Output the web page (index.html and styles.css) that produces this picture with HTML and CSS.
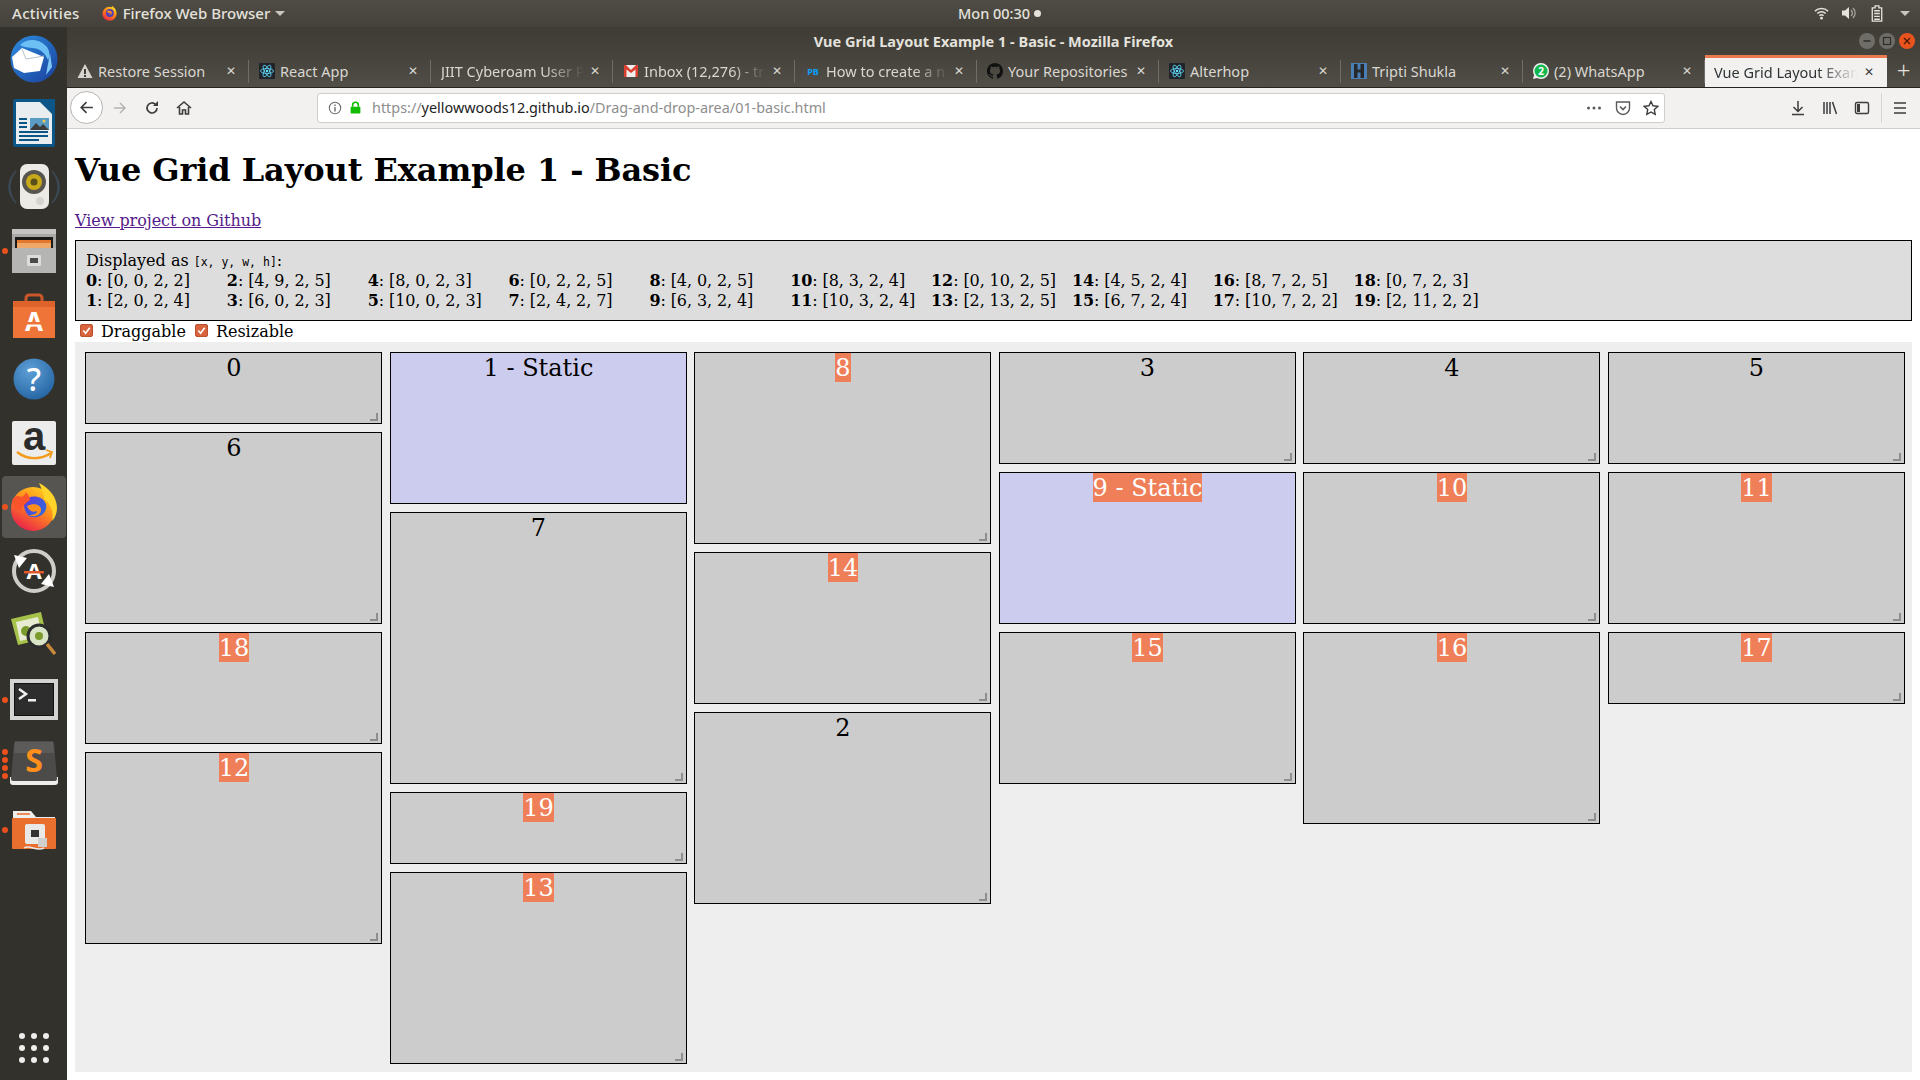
FILE: index.html
```html
<!DOCTYPE html>
<html lang="en">
<head>
<meta charset="utf-8">
<title>Vue Grid Layout Example 1 - Basic</title>
<link rel="stylesheet" href="styles.css">
</head>
<body>
<header class="topbar">
  <div class="topbar-left">
    <span class="top-label top-activities">Activities</span>
    <span class="top-app">
      <svg class="ff-small" viewBox="0 0 48 48"><defs><linearGradient id="ffa" x1="0.8" y1="0" x2="0.2" y2="1"><stop offset="0" stop-color="#ffd21f"/><stop offset="0.5" stop-color="#ff7a1a"/><stop offset="1" stop-color="#e8204f"/></linearGradient></defs><circle cx="24" cy="26" r="20" fill="url(#ffa)"/><circle cx="25" cy="24" r="11" fill="#4a3fc0"/><path d="M16 20c6-6 13-3 15 2 1 5-5 9-11 7 5 0 8-2 7-5-3 2-8 0-11-4z" fill="#ff8b1d"/><path d="M30 3c8 5 14 13 13 22-2-7-6-10-10-13 0-3-2-6-3-9z" fill="#ffd21f"/></svg>
      <span class="top-label">Firefox Web Browser</span>
      <span class="caret"></span>
    </span>
  </div>
  <div class="top-clock">Mon 00:30<span class="clock-dot"></span></div>
  <div class="topbar-right">
    <svg class="st-wifi" viewBox="0 0 16 16"><path d="M1 6a10 10 0 0 1 14 0M3.500 8.500a6.500 6.500 0 0 1 9 0M5.800 11a3.200 3.200 0 0 1 4.400 0" fill="none" stroke="#e4e2dc" stroke-width="1.500"/><circle cx="8" cy="13.500" r="1.500" fill="#e4e2dc"/></svg>
    <svg class="st-vol" viewBox="0 0 16 16"><path d="M1 5.500h3l4-3.500v12l-4-3.500H1z" fill="#e4e2dc"/><path d="M10 5a4 4 0 0 1 0 6M12 3a7 7 0 0 1 0 10" fill="none" stroke="#a8a69f" stroke-width="1.300"/></svg>
    <svg class="st-bat" viewBox="0 0 12 18"><path d="M4 1h4v2h3v14H1V3h3z" fill="none" stroke="#e4e2dc" stroke-width="1.400"/><path d="M3 6h6M3 9h6M3 12h6M3 15h6" stroke="#e4e2dc" stroke-width="1.500"/></svg>
    <span class="caret caret-right"></span>
  </div>
</header>
<div class="desktop">
  <nav class="dock">
    <div class="dock-item">
      <svg class="dock-icon" viewBox="0 0 48 48"><defs><linearGradient id="tb" x1="0" y1="0" x2="1" y2="1"><stop offset="0" stop-color="#2d8ee0"/><stop offset="1" stop-color="#1a3f9c"/></linearGradient></defs><circle cx="24" cy="24" r="23.500" fill="url(#tb)"/><path d="M10 10c8-8 20-6 27 2 3 5 3 9 1 13-3-7-8-12-16-12-5-1-9-1-12-3z" fill="#6cc0f4"/><path d="M2 22l10-9 22 9-4 14-16 2-10-5z" fill="#fff"/><path d="M12 14l4 10 18-3" fill="none" stroke="#b9c2cc" stroke-width="1"/><path d="M40 18l2 14-6 8z" fill="#7fc8f5"/></svg>
    </div>
    <div class="dock-item">
      <svg class="dock-icon" viewBox="0 0 48 48"><rect x="3" y="0" width="42" height="48" rx="2" fill="#0c5587"/><path d="M6 3h24l12 12v30H6z" fill="#e9edef"/><path d="M32 0h13v13z" fill="#0c5587"/><path d="M9 20h8M9 24h8M9 28h8M9 33h29M9 37h29M9 41h20" stroke="#0c5587" stroke-width="2"/><rect x="20" y="19" width="19" height="12" fill="#5a9bc4"/><path d="M20 31l6-7 4 4 3-3 6 6z" fill="#3c3c3c"/><circle cx="34" cy="22" r="1.500" fill="#f2c94c"/></svg>
    </div>
    <div class="dock-item">
      <svg class="dock-icon" viewBox="0 0 48 48"><path d="M6 8a24 24 0 0 0 0 32M42 8a24 24 0 0 1 0 32M3 12a20 20 0 0 0 0 24M45 12a20 20 0 0 1 0 24" fill="none" stroke="#3c4a58" stroke-width="1.500"/><rect x="10" y="1" width="29" height="45" rx="7" fill="#eceae4"/><circle cx="24" cy="19" r="12" fill="#57554e"/><circle cx="24" cy="19" r="8" fill="#c8a91a"/><circle cx="24" cy="19" r="3.500" fill="#57501a"/><circle cx="30" cy="38" r="4" fill="#d6d4ce"/></svg>
    </div>
    <div class="dock-item">
      <span class="run-dot"></span>
      <svg class="dock-icon" viewBox="0 0 48 48"><rect x="2" y="2" width="44" height="44" rx="2" fill="#a9a9a7"/><rect x="2" y="2" width="44" height="5" fill="#c4c4c2"/><rect x="5" y="10" width="38" height="12" fill="#1d1b19"/><rect x="7" y="13" width="34" height="9" fill="#f0a868"/><rect x="7" y="13" width="34" height="3" fill="#e2772e"/><rect x="2" y="21" width="44" height="25" fill="#b5b5b3"/><rect x="17" y="28" width="14" height="11" rx="1" fill="#dcdcda"/><rect x="20" y="31" width="8" height="5" fill="#4a4a48"/></svg>
    </div>
    <div class="dock-item">
      <svg class="dock-icon" viewBox="0 0 48 48"><path d="M16 12V7a3 3 0 0 1 3-3h10a3 3 0 0 1 3 3v5" fill="none" stroke="#c9572a" stroke-width="3"/><path d="M3 10h42v37H3z" fill="#ef7437"/><path d="M3 10h42v6H3z" fill="#dd632a"/><text x="24" y="40" class="dock-a">A</text><rect x="13" y="31" width="22" height="2.500" fill="#ef7437"/></svg>
    </div>
    <div class="dock-item">
      <svg class="dock-icon" viewBox="0 0 48 48"><defs><radialGradient id="hp" cx="0.4" cy="0.3" r="0.8"><stop offset="0" stop-color="#5fa0d8"/><stop offset="1" stop-color="#20609e"/></radialGradient></defs><circle cx="24" cy="24" r="20.500" fill="url(#hp)"/><text x="24" y="36" class="dock-q">?</text></svg>
    </div>
    <div class="dock-item">
      <svg class="dock-icon" viewBox="0 0 48 48"><rect x="2" y="2" width="44" height="44" rx="2" fill="#ececec"/><text x="24" y="31" class="dock-amz">a</text><path d="M7 33c10 8 24 8 34 1" fill="none" stroke="#f29b1d" stroke-width="2.500"/><path d="M36 31l6 2-2 6" fill="none" stroke="#f29b1d" stroke-width="1.800"/></svg>
    </div>
    <div class="dock-item dock-active">
      <span class="run-dot"></span>
      <svg class="dock-icon" viewBox="0 0 48 48"><defs><linearGradient id="ffb" x1="0.8" y1="0" x2="0.2" y2="1"><stop offset="0" stop-color="#ffd21e"/><stop offset="0.45" stop-color="#ff8a1f"/><stop offset="1" stop-color="#e8174f"/></linearGradient><linearGradient id="ffc" x1="0" y1="0" x2="1" y2="1"><stop offset="0" stop-color="#5f3ad6"/><stop offset="1" stop-color="#2b6fe0"/></linearGradient></defs><circle cx="23" cy="26" r="22" fill="url(#ffb)"/><path d="M14 18c4-6 18-7 22 3 2 8-6 15-15 13-5-2-8-9-7-16z" fill="url(#ffc)"/><path d="M2 18c1 6 4 9 9 10 1-4 4-8 9-11 0-3-2-5-4-8-1 4-5 6-8 4-3 0-5 2-6 5z" fill="#f9542a"/><path d="M17 23c6-3 13-2 14 3 1 6-7 9-12 6 4 0 8-1 8-4-4 2-8 0-10-5z" fill="#ff8e1c"/><path d="M29 0c10 5 18 14 18 25 0 5-2 10-5 13 2-9-1-17-8-22 0-6-3-11-5-16z" fill="#ffd42a"/></svg>
    </div>
    <div class="dock-item">
      <svg class="dock-icon" viewBox="0 0 48 48"><circle cx="24" cy="24" r="20" fill="#33312c" stroke="#cfcdc8" stroke-width="4"/><path d="M4 8l13 3-8 10z" fill="#fff"/><path d="M44 40l-13-3 8-10z" fill="#fff"/><text x="24" y="32" class="dock-upd">A</text><rect x="14" y="24" width="20" height="2.500" fill="#e2572a"/></svg>
    </div>
    <div class="dock-item">
      <svg class="dock-icon" viewBox="0 0 48 48"><path d="M1 8l30-7 6 26-29 7z" fill="#a6c24b"/><path d="M6 11l22-5 4 19-22 5z" fill="#e8ecd2"/><circle cx="16" cy="20" r="5" fill="#7b9b2c"/><circle cx="29" cy="25" r="11" fill="#d9e5c6" stroke="#2b2d2e" stroke-width="3"/><circle cx="29" cy="25" r="4" fill="#7b9b2c"/><path d="M37 33l8 10" stroke="#c98b3a" stroke-width="3.500"/></svg>
    </div>
    <div class="dock-item dock-term">
      <span class="run-dot"></span>
      <svg class="dock-icon" viewBox="0 0 48 48"><rect x="0" y="3" width="48" height="41" fill="#d3d3d1"/><rect x="4" y="7" width="40" height="33" fill="#111"/><rect x="5" y="8" width="38" height="31" fill="#2d2d2d"/><path d="M9 13l7 5-7 5" fill="none" stroke="#f0f0f0" stroke-width="2.500"/><rect x="18" y="23" width="8" height="2.500" fill="#f0f0f0"/></svg>
    </div>
    <div class="dock-item">
      <span class="run-dot dot-a"></span><span class="run-dot dot-b"></span><span class="run-dot dot-c"></span><span class="run-dot dot-d"></span>
      <svg class="dock-icon" viewBox="0 0 48 48"><path d="M0 38h48v5a3 3 0 0 1-3 3H3a3 3 0 0 1-3-3z" fill="#eeeeec"/><path d="M6 2h36a2 2 0 0 1 2 2l3 36a2 2 0 0 1-2 2H3a2 2 0 0 1-2-2L4 4a2 2 0 0 1 2-2z" fill="#4c4b49"/><path d="M5 3h38l1 11H4z" fill="#5c5b59"/><text x="24" y="33" class="dock-s">S</text></svg>
    </div>
    <div class="dock-item dock-folder">
      <span class="run-dot"></span>
      <svg class="dock-icon" viewBox="0 0 48 48"><path d="M3 5h18l5 6h19v10H3z" fill="#eeeeec"/><rect x="7" y="7" width="13" height="2" fill="#ee8a5a"/><rect x="2" y="12" width="44" height="31" rx="1" fill="#e96f2e"/><rect x="15" y="18" width="20" height="20" rx="2" fill="#e9e9e7"/><rect x="21" y="24" width="8" height="7" fill="#333"/><rect x="28" y="32" width="9" height="9" fill="#d0d0ce"/><path d="M14 42c6-4 12 4 20 0" fill="none" stroke="#e9e9e7" stroke-width="1.500"/></svg>
    </div>
    <div class="dock-grid"><i></i><i></i><i></i><i></i><i></i><i></i><i></i><i></i><i></i></div>
  </nav>
  <div class="browser">
    <div class="titlebar">
      <span class="title-text">Vue Grid Layout Example 1 - Basic - Mozilla Firefox</span>
      <div class="win-buttons">
        <span class="win-btn"><svg viewBox="0 0 16 16"><path d="M4.500 8h7" stroke="#2e2d29" stroke-width="1.500"/></svg></span>
        <span class="win-btn"><svg viewBox="0 0 16 16"><rect x="4.500" y="4.500" width="7" height="7" fill="none" stroke="#2e2d29" stroke-width="1.200"/></svg></span>
        <span class="win-btn win-close"><svg viewBox="0 0 16 16"><path d="M5 5l6 6M11 5l-6 6" stroke="#4a1a08" stroke-width="1.300"/></svg></span>
      </div>
    </div>
    <div class="tabstrip">
      <div class="tab"><svg class="tab-icon" viewBox="0 0 16 16"><path d="M8 1l7.500 14H.5z" fill="#d6d4ce"/><rect x="7" y="6" width="2" height="5" fill="#3f3d37"/><rect x="7" y="12" width="2" height="2" fill="#3f3d37"/></svg><span class="tab-label">Restore Session</span><span class="tab-close">✕</span></div>
      <div class="tab"><svg class="tab-icon" viewBox="0 0 16 16"><rect width="16" height="16" rx="1" fill="#20232a"/><g fill="none" stroke="#61dafb" stroke-width=".8"><ellipse cx="8" cy="8" rx="6.500" ry="2.500"/><ellipse cx="8" cy="8" rx="6.500" ry="2.500" transform="rotate(60 8 8)"/><ellipse cx="8" cy="8" rx="6.500" ry="2.500" transform="rotate(120 8 8)"/></g><circle cx="8" cy="8" r="1.300" fill="#61dafb"/></svg><span class="tab-label">React App</span><span class="tab-close">✕</span></div>
      <div class="tab"><span class="tab-label fade">JIIT Cyberoam User P</span><span class="tab-close">✕</span></div>
      <div class="tab"><svg class="tab-icon" viewBox="0 0 16 16"><rect x="1" y="2" width="14" height="12" fill="#eeeeec"/><path d="M1 2h2l5 5 5-5h2v12h-2.500V6.500L8 10 3.500 6.500V14H1z" fill="#d9402f"/></svg><span class="tab-label fade">Inbox (12,276) - tri</span><span class="tab-close">✕</span></div>
      <div class="tab"><svg class="tab-icon" viewBox="0 0 16 16"><text x="8" y="12" class="pb-text">PB</text></svg><span class="tab-label fade">How to create a nc</span><span class="tab-close">✕</span></div>
      <div class="tab"><svg class="tab-icon" viewBox="0 0 16 16"><path fill="#111" d="M8 0C3.580 0 0 3.580 0 8c0 3.540 2.290 6.530 5.470 7.590.4.070.55-.17.55-.38 0-.19-.01-.82-.01-1.490-2.010.37-2.530-.49-2.690-.94-.09-.23-.48-.94-.82-1.130-.28-.15-.68-.52-.01-.53.63-.01 1.080.58 1.230.82.72 1.210 1.870.87 2.330.66.07-.52.28-.87.51-1.070-1.780-.2-3.640-.89-3.640-3.950 0-.87.31-1.590.82-2.150-.08-.2-.36-1.020.08-2.120 0 0 .67-.21 2.200.82.64-.18 1.320-.27 2-.27.68 0 1.360.09 2 .27 1.530-1.040 2.200-.82 2.200-.82.44 1.100.16 1.920.08 2.120.51.56.82 1.270.82 2.150 0 3.070-1.870 3.750-3.650 3.950.29.25.54.73.54 1.480 0 1.070-.01 1.930-.01 2.200 0 .21.15.46.55.38A8.013 8.013 0 0016 8c0-4.420-3.580-8-8-8z"/></svg><span class="tab-label">Your Repositories</span><span class="tab-close">✕</span></div>
      <div class="tab"><svg class="tab-icon" viewBox="0 0 16 16"><rect width="16" height="16" rx="1" fill="#20232a"/><g fill="none" stroke="#61dafb" stroke-width=".8"><ellipse cx="8" cy="8" rx="6.500" ry="2.500"/><ellipse cx="8" cy="8" rx="6.500" ry="2.500" transform="rotate(60 8 8)"/><ellipse cx="8" cy="8" rx="6.500" ry="2.500" transform="rotate(120 8 8)"/></g><circle cx="8" cy="8" r="1.300" fill="#61dafb"/></svg><span class="tab-label">Alterhop</span><span class="tab-close">✕</span></div>
      <div class="tab"><svg class="tab-icon" viewBox="0 0 16 16"><rect width="16" height="16" fill="#4a7fb5"/><rect x="3" y="1" width="3.500" height="14" fill="#26282b"/><rect x="9.500" y="1" width="3.500" height="14" fill="#26282b"/><rect x="6" y="6.500" width="4" height="3" fill="#26282b"/></svg><span class="tab-label">Tripti Shukla</span><span class="tab-close">✕</span></div>
      <div class="tab"><svg class="tab-icon" viewBox="0 0 16 16"><path d="M8 0a8 8 0 0 1 0 16c-1.400 0-2.700-.4-3.800-1L0 16l1.100-4A8 8 0 0 1 8 0z" fill="#eeeeec"/><circle cx="8" cy="8" r="6.500" fill="#12b84f"/><text x="8" y="11.500" class="wa-text">2</text></svg><span class="tab-label">(2) WhatsApp</span><span class="tab-close">✕</span></div>
      <div class="tab tab-active"><span class="tab-label fade">Vue Grid Layout Exam</span><span class="tab-close">✕</span></div>
      <span class="tab-new">+</span>
    </div>
    <div class="toolbar">
      <span class="back-btn"><svg viewBox="0 0 16 16"><path d="M14 8H3M8 3L3 8l5 5" fill="none" stroke="#3c3c3c" stroke-width="1.500"/></svg></span>
      <span class="tool-btn"><svg viewBox="0 0 16 16"><path d="M2 8h11M8 3l5 5-5 5" fill="none" stroke="#b4b4b2" stroke-width="1.500"/></svg></span>
      <span class="tool-btn"><svg viewBox="0 0 16 16"><path d="M13 8a5 5 0 1 1-1.600-3.700" fill="none" stroke="#3c3c3c" stroke-width="1.700"/><path d="M14 1v5H9z" fill="#3c3c3c"/></svg></span>
      <span class="tool-btn"><svg viewBox="0 0 16 16"><path d="M1 8l7-6 7 6M3.500 7v7h3v-4h3v4h3V7" fill="none" stroke="#3c3c3c" stroke-width="1.600"/></svg></span>
      <div class="urlbar">
        <svg class="url-info" viewBox="0 0 16 16"><circle cx="8" cy="8" r="6.500" fill="none" stroke="#6a6a6a" stroke-width="1.200"/><rect x="7.200" y="7" width="1.600" height="5" fill="#6a6a6a"/><rect x="7.200" y="4" width="1.600" height="1.700" fill="#6a6a6a"/></svg>
        <svg class="url-lock" viewBox="0 0 16 16"><path d="M4.500 7V5a3.500 3.500 0 0 1 7 0v2" fill="none" stroke="#12bc00" stroke-width="2"/><rect x="2" y="7" width="12" height="8.500" rx="1" fill="#12bc00"/></svg>
        <span class="url-text"><span class="url-dim">https://</span>yellowwoods12.github.io<span class="url-dim">/Drag-and-drop-area/01-basic.html</span></span>
        <span class="url-end">
          <svg class="url-dots" viewBox="0 0 16 4"><circle cx="2.500" cy="2" r="1.500"/><circle cx="8" cy="2" r="1.500"/><circle cx="13.500" cy="2" r="1.500"/></svg>
          <svg class="url-act" viewBox="0 0 16 16"><path d="M1.500 2h13v6a6.500 6.500 0 0 1-13 0z" fill="none" stroke="#5a5a5a" stroke-width="1.400"/><path d="M5 6.500l3 3 3-3" fill="none" stroke="#5a5a5a" stroke-width="1.600"/></svg>
          <svg class="url-act" viewBox="0 0 16 16"><path d="M8 1.500l2 4.300 4.700.6-3.400 3.200.9 4.700L8 12l-4.200 2.300.9-4.700L1.300 6.400 6 5.800z" fill="none" stroke="#3c3c3c" stroke-width="1.400"/></svg>
        </span>
      </div>
      <div class="tool-right">
        <span class="tool-btn"><svg viewBox="0 0 16 16"><path d="M8 1v10M3.500 7L8 11.500 12.500 7M2 14.500h12" fill="none" stroke="#3c3c3c" stroke-width="1.500"/></svg></span>
        <span class="tool-btn"><svg viewBox="0 0 16 16"><path d="M2 2v12M5 2v12M8 2v12M10.500 2l4 12" fill="none" stroke="#3c3c3c" stroke-width="1.500"/></svg></span>
        <span class="tool-btn"><svg viewBox="0 0 16 16"><rect x="1.500" y="2.500" width="13" height="11" rx="1.500" fill="none" stroke="#3c3c3c" stroke-width="1.400"/><rect x="3" y="4" width="3" height="8" fill="#3c3c3c"/></svg></span>
        <span class="tool-sep"></span>
        <span class="tool-btn"><svg viewBox="0 0 16 16"><path d="M2 3h12M2 8h12M2 13h12" stroke="#3c3c3c" stroke-width="1.600"/></svg></span>
      </div>
    </div>
    <main class="page">
      <h1 class="page-title">Vue Grid Layout Example 1 - Basic</h1>
      <a class="page-link" href="#github">View project on Github</a>
      <section class="layout-json">
        <div class="json-head">Displayed as <code class="mono">[x, y, w, h]</code>:</div>
        <div class="columns">
          <div class="entry"><b>0</b>: [0, 0, 2, 2]</div>
          <div class="entry"><b>1</b>: [2, 0, 2, 4]</div>
          <div class="entry"><b>2</b>: [4, 9, 2, 5]</div>
          <div class="entry"><b>3</b>: [6, 0, 2, 3]</div>
          <div class="entry"><b>4</b>: [8, 0, 2, 3]</div>
          <div class="entry"><b>5</b>: [10, 0, 2, 3]</div>
          <div class="entry"><b>6</b>: [0, 2, 2, 5]</div>
          <div class="entry"><b>7</b>: [2, 4, 2, 7]</div>
          <div class="entry"><b>8</b>: [4, 0, 2, 5]</div>
          <div class="entry"><b>9</b>: [6, 3, 2, 4]</div>
          <div class="entry"><b>10</b>: [8, 3, 2, 4]</div>
          <div class="entry"><b>11</b>: [10, 3, 2, 4]</div>
          <div class="entry"><b>12</b>: [0, 10, 2, 5]</div>
          <div class="entry"><b>13</b>: [2, 13, 2, 5]</div>
          <div class="entry"><b>14</b>: [4, 5, 2, 4]</div>
          <div class="entry"><b>15</b>: [6, 7, 2, 4]</div>
          <div class="entry"><b>16</b>: [8, 7, 2, 5]</div>
          <div class="entry"><b>17</b>: [10, 7, 2, 2]</div>
          <div class="entry"><b>18</b>: [0, 7, 2, 3]</div>
          <div class="entry"><b>19</b>: [2, 11, 2, 2]</div>
        </div>
      </section>
      <div class="options">
        <label class="option"><span class="check"><svg viewBox="0 0 12 12"><path d="M2.500 6l2.500 3 4.500-6" fill="none" stroke="#fff" stroke-width="1.800"/></svg></span>Draggable</label>
        <label class="option"><span class="check"><svg viewBox="0 0 12 12"><path d="M2.500 6l2.500 3 4.500-6" fill="none" stroke="#fff" stroke-width="1.800"/></svg></span>Resizable</label>
      </div>
      <div class="grid">
        <div class="item" style="grid-area:1/1/span 2/span 2"><span class="text">0</span></div>
        <div class="item static" style="grid-area:1/3/span 4/span 2"><span class="text">1 - Static</span></div>
        <div class="item" style="grid-area:10/5/span 5/span 2"><span class="text">2</span></div>
        <div class="item" style="grid-area:1/7/span 3/span 2"><span class="text">3</span></div>
        <div class="item" style="grid-area:1/9/span 3/span 2"><span class="text">4</span></div>
        <div class="item" style="grid-area:1/11/span 3/span 2"><span class="text">5</span></div>
        <div class="item" style="grid-area:3/1/span 5/span 2"><span class="text">6</span></div>
        <div class="item" style="grid-area:5/3/span 7/span 2"><span class="text">7</span></div>
        <div class="item" style="grid-area:1/5/span 5/span 2"><span class="text hot">8</span></div>
        <div class="item static" style="grid-area:4/7/span 4/span 2"><span class="text hot">9 - Static</span></div>
        <div class="item" style="grid-area:4/9/span 4/span 2"><span class="text hot">10</span></div>
        <div class="item" style="grid-area:4/11/span 4/span 2"><span class="text hot">11</span></div>
        <div class="item" style="grid-area:11/1/span 5/span 2"><span class="text hot">12</span></div>
        <div class="item" style="grid-area:14/3/span 5/span 2"><span class="text hot">13</span></div>
        <div class="item" style="grid-area:6/5/span 4/span 2"><span class="text hot">14</span></div>
        <div class="item" style="grid-area:8/7/span 4/span 2"><span class="text hot">15</span></div>
        <div class="item" style="grid-area:8/9/span 5/span 2"><span class="text hot">16</span></div>
        <div class="item" style="grid-area:8/11/span 2/span 2"><span class="text hot">17</span></div>
        <div class="item" style="grid-area:8/1/span 3/span 2"><span class="text hot">18</span></div>
        <div class="item" style="grid-area:12/3/span 2/span 2"><span class="text hot">19</span></div>
      </div>
    </main>
  </div>
</div>
</body>
</html>
```
FILE: styles.css
```css
* { box-sizing: border-box; }
html, body { margin: 0; height: 100%; overflow: hidden; }
body { display: flex; flex-direction: column; width: 1920px; height: 1080px; font-family: "DejaVu Serif", serif; font-size: 16px; background: #fff; color: #000; }

.topbar { flex: 0 0 27px; display: flex; align-items: center; justify-content: space-between; position: relative; padding: 0 0 1px 12px; background: linear-gradient(#4f4c45, #45423b); font-family: "Noto Sans", sans-serif; font-size: 15px; font-weight: 500; color: #e4e2dc; }
.topbar-left { display: flex; align-items: center; gap: 21px; }
.top-activities { letter-spacing: .3px; }
.top-app { display: flex; align-items: center; gap: 5px; }
.ff-small { width: 17px; height: 20px; }
.caret { width: 0; height: 0; border-left: 5px solid transparent; border-right: 5px solid transparent; border-top: 5px solid #c9c7c1; }
.top-clock { position: absolute; left: 958px; display: flex; align-items: center; gap: 4px; white-space: nowrap; font-size: 14.500px; }
.clock-dot { width: 7px; height: 7px; border-radius: 50%; background: #e4e2dc; }
.topbar-right { display: flex; align-items: center; padding-right: 10px; }
.st-wifi { width: 15px; height: 16px; margin-right: 12px; }
.st-vol { width: 16px; height: 16px; margin-right: 14px; }
.st-bat { width: 12px; height: 17px; margin-right: 17px; }

.desktop { flex: 1; display: flex; min-height: 0; }
.dock { flex: 0 0 67px; display: flex; flex-direction: column; background: #33312c; }
.dock-item { flex: 0 0 64px; position: relative; display: flex; align-items: center; justify-content: center; border-radius: 4px; }
.dock-active { background: #575551; margin: 1px 1px 1px 2px; flex-basis: 62px; }
.dock-term { top: 1px; }
.dock-folder { margin-top: 3px; }
.dock-icon { width: 48px; height: 48px; overflow: visible; }
.run-dot { position: absolute; left: 2px; top: 50%; width: 6px; height: 6px; margin-top: -3px; border-radius: 50%; background: #e9501e; }
.dock-active .run-dot { left: 0; }
.dot-a { margin-top: -14px; }
.dot-b { margin-top: -6px; }
.dot-c { margin-top: 2px; }
.dot-d { margin-top: 10px; }
.dock-a, .dock-upd { font-family: "Noto Sans", sans-serif; font-size: 26px; font-weight: 700; fill: #fff; text-anchor: middle; }
.dock-upd { font-size: 22px; }
.dock-q { font-family: "Noto Sans", sans-serif; font-size: 32px; font-weight: 500; fill: #fff; text-anchor: middle; }
.dock-amz { font-family: "Liberation Sans", sans-serif; font-size: 40px; font-weight: 700; fill: #2b2b2b; text-anchor: middle; }
.dock-s { font-family: "Noto Sans", sans-serif; font-size: 32px; font-weight: 700; fill: #ff8f1c; text-anchor: middle; }
.dock-grid { margin-top: auto; margin-bottom: 17px; align-self: center; display: grid; grid-template-columns: repeat(3, 6px); gap: 6px; }
.dock-grid i { width: 6px; height: 6px; border-radius: 50%; background: #eeeeec; }

.browser { flex: 1; min-width: 0; display: flex; flex-direction: column; }
.titlebar { flex: 0 0 29px; position: relative; display: flex; align-items: center; justify-content: center; padding-bottom: 2px; background: linear-gradient(#3e3c35, #46433c); font-family: "Noto Sans", sans-serif; font-size: 14.500px; font-weight: 700; color: #e4e2dc; }
.win-buttons { position: absolute; right: 5px; top: 6px; display: flex; gap: 4px; }
.win-btn { width: 16px; height: 16px; border-radius: 50%; background: #6f6d67; display: block; }
.win-btn svg { display: block; width: 16px; height: 16px; }
.win-close { background: #e9541e; }

.tabstrip { flex: 0 0 32px; display: flex; align-items: stretch; background: linear-gradient(#46433c, #514e47); border-bottom: 1px solid #24231f; font-family: "Noto Sans", sans-serif; font-size: 14.500px; color: #d9d7d1; }
.tab { flex: 0 0 182px; min-width: 0; height: 31px; padding: 0 0 1px 10px; display: flex; align-items: center; position: relative; }
.tab::after { content: ""; position: absolute; right: 0; top: 4px; bottom: 4px; width: 1px; background: #6f6d66; }
.tab-icon { flex: 0 0 16px; width: 16px; height: 16px; margin-right: 5px; overflow: visible; }
.tab-label { flex: 1; min-width: 0; white-space: nowrap; overflow: hidden; }
.fade { -webkit-mask-image: linear-gradient(90deg, #000 72%, transparent 100%); mask-image: linear-gradient(90deg, #000 72%, transparent 100%); }
.tab-close { flex: 0 0 12px; margin: 0 12px 0 5px; font-size: 12px; color: #d9d7d1; text-align: center; line-height: 1; }
.pb-text { font-family: "Noto Sans", sans-serif; font-size: 9px; font-weight: 700; fill: #0aa0ff; text-anchor: middle; }
.wa-text { font-family: "Noto Sans", sans-serif; font-size: 10px; font-weight: 700; fill: #fff; text-anchor: middle; }
.tab-active { background: #f2f1f0; color: #2e3436; border-top: 3px solid #e97a50; margin-top: -1px; height: 32px; padding: 0 0 2px 9px; }
.tab-active::after { display: none; }
.tab-active .tab-close { color: #3c3c3c; }
.tab-new { flex: 1; text-align: center; font-size: 24px; line-height: 28px; font-weight: 300; color: #e4e2dc; }

.toolbar { flex: 0 0 41px; display: flex; align-items: center; padding: 0 4px 1px 3px; background: #f2f1f0; border-bottom: 1px solid #cfcdc9; }
.back-btn { flex: 0 0 33px; height: 33px; margin-right: 1px; border-radius: 50%; border: 1px solid #b6b4b0; background: #fff; display: flex; align-items: center; justify-content: center; }
.back-btn svg { width: 17px; height: 17px; }
.tool-btn { flex: 0 0 32px; height: 32px; display: flex; align-items: center; justify-content: center; }
.tool-btn svg { width: 16px; height: 16px; }
.urlbar { flex: 0 0 1348px; height: 30px; margin-left: 117px; display: flex; align-items: center; padding: 0 5px 0 0; background: #fff; border: 1px solid #cfcdc9; border-radius: 3px; font-family: "Noto Sans", sans-serif; font-size: 14.400px; color: #1d1d1d; }
.url-info { width: 14px; height: 14px; margin-left: 10px; }
.url-lock { width: 13px; height: 15px; margin-left: 7px; }
.url-text { margin-left: 10px; white-space: nowrap; }
.url-dim { color: #8e8e8e; }
.url-end { margin-left: auto; display: flex; align-items: center; }
.url-dots { width: 16px; height: 4px; margin-right: 13px; fill: #5a5a5a; }
.url-act { width: 16px; height: 16px; margin-left: 12px; }
.url-dots + .url-act { margin-left: 0; }
.tool-right { margin-left: auto; display: flex; align-items: center; }
.tool-sep { width: 1px; height: 30px; margin: 0 2px 0 3px; background: #d7d5d1; }

.page { flex: 1; min-height: 0; padding: 0 8px; background: #fff; }
.page-title { margin: 22px 0 22px; font-size: 32px; font-weight: 700; line-height: 38px; letter-spacing: -.08px; }
.page-link { display: block; line-height: 19px; letter-spacing: -.05px; color: #551a8b; text-decoration: underline; }
.layout-json { margin-top: 10px; height: 81px; padding: 11px 10px 0; background: #ddd; border: 1px solid #000; line-height: 20px; }
.json-head { line-height: 17px; }
.mono { font-family: "DejaVu Sans Mono", monospace; font-size: 11.500px; }
.columns { columns: 120px; }
.entry { break-inside: avoid; white-space: nowrap; letter-spacing: -.1px; }
.options { height: 21px; display: flex; align-items: center; padding-left: 5px; gap: 9px; }
.option { display: flex; align-items: center; }
.check { width: 13px; height: 13px; margin: 0 8px 2px 0; border-radius: 2px; background: #d9633c; border: 1px solid #b9502e; display: block; }
.check svg { display: block; width: 11px; height: 11px; }

.grid { display: grid; grid-template-columns: repeat(12, 1fr); grid-template-rows: repeat(18, 30px); gap: 10px; padding: 10px 9.600px 10px 10.400px; background: #eee; height: 730px; }
.item { position: relative; box-sizing: content-box; width: calc(100% + .6px); height: 100%; background: #ccc; border: 1px solid #000; text-align: center; font-size: 24px; line-height: 31px; }
.static { background: #cce; }
.text { display: inline-block; height: 29px; }
.hot { background: #ef7f58; color: #fff; }
.item::after { content: ""; position: absolute; right: 3px; bottom: 2px; width: 6px; height: 6px; border-right: 2px solid #8e8e8e; border-bottom: 2px solid #8e8e8e; }
.static::after { display: none; }
```
